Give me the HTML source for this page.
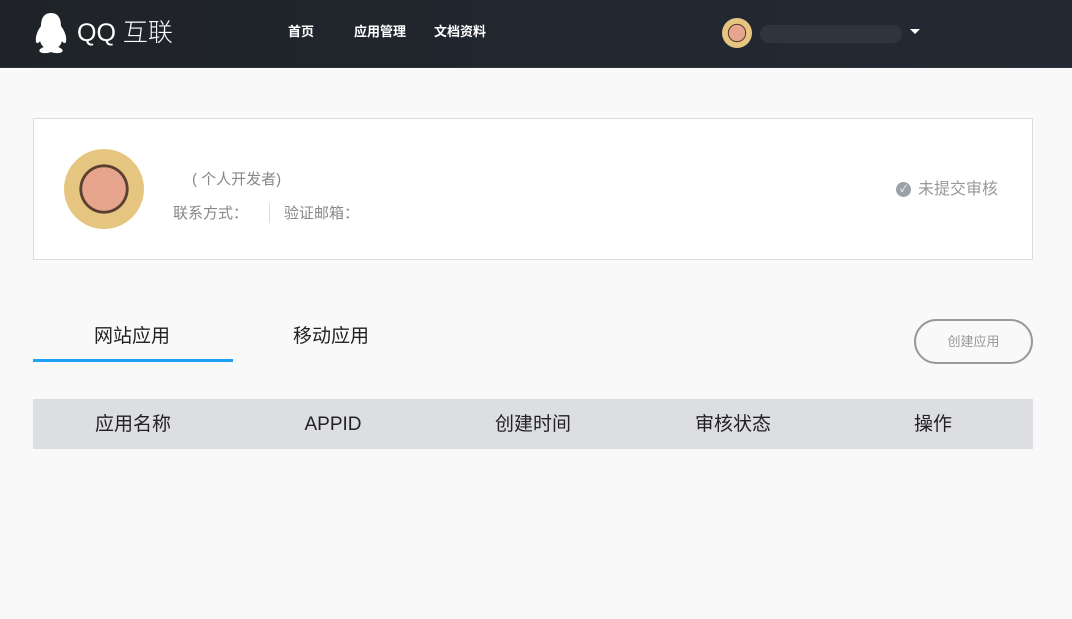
<!DOCTYPE html>
<html><head><meta charset="utf-8"><style>
*{margin:0;padding:0;box-sizing:border-box}
body{width:1072px;height:619px;background:#f9f9f9;font-family:"Liberation Sans","Noto Sans CJK SC",sans-serif;overflow:hidden;position:relative}
div,span{line-height:1}
.hd{position:absolute;left:0;top:0;width:1072px;height:68px;background:linear-gradient(90deg,#1f2328,#222830 60%,#232a33);border-bottom:1px solid #2e343b}
.a{position:absolute}
.nav{color:#fff;font-size:13px;font-weight:bold;top:25px}
.card{position:absolute;left:33px;top:118px;width:1000px;height:142px;background:#fff;border:1px solid #dcdcdc}
.face{border-radius:50%;background:radial-gradient(circle at 50% 50%,#e6a58c 0 38%,#5a4030 39% 43%,#e5c57f 44%)}
.th{position:absolute;top:399px;left:33px;width:1000px;height:50px;background:#dcdee2;font-size:19px;color:#222}
.th span{position:absolute;top:16px;width:200px;text-align:center;line-height:19px}
</style></head><body>
<div class="hd">
 <svg class="a" style="left:33px;top:12px" width="37" height="42" viewBox="0 0 37 42"><path d="M18 1C10 1 8 8 8 14 5 18 2 24 3 30c1 2 3 1 4-1 1 3 2 5 4 6-3 1-6 3-4 5 3 2 9 1 11 0 2 1 8 2 11 0 2-2-1-4-4-5 2-1 3-3 4-6 1 2 3 3 4 1 1-6-2-12-5-16 0-6-2-13-10-13z" fill="#fff"/></svg>
 <div class="a" style="left:77px;top:21px;color:#fff;font-size:25px;font-weight:300">QQ 互联</div>
 <div class="a nav" style="left:288px">首页</div>
 <div class="a nav" style="left:354px">应用管理</div>
 <div class="a nav" style="left:434px">文档资料</div>
 <div class="a face" style="left:722px;top:18px;width:30px;height:30px"></div>
 <div class="a" style="left:760px;top:25px;width:142px;height:18px;border-radius:9px;background:#2e353d"></div>
 <div class="a" style="left:910px;top:29px;width:0;height:0;border-left:5px solid transparent;border-right:5px solid transparent;border-top:5px solid #fff"></div>
</div>
<div class="card">
 <div class="a face" style="left:30px;top:30px;width:80px;height:80px"></div>
 <div class="a" style="left:158px;top:53px;font-size:15px;color:#888">( 个人开发者)</div>
 <div class="a" style="left:139px;top:87px;font-size:15px;color:#888">联系方式：</div>
 <div class="a" style="left:235px;top:84px;width:1px;height:20px;background:#ddd"></div>
 <div class="a" style="left:250px;top:87px;font-size:15px;color:#888">验证邮箱：</div>
 <div class="a" style="left:862px;top:63px;width:15px;height:15px;border-radius:50%;background:#9aa0a8;color:#fff;font-size:10px;text-align:center;line-height:15px">✓</div>
 <div class="a" style="left:884px;top:63px;font-size:16px;color:#999">未提交审核</div>
</div>
<div class="a" style="left:94px;top:327px;font-size:19px;color:#222">网站应用</div>
<div class="a" style="left:33px;top:359px;width:200px;height:3px;background:#1da1f2"></div>
<div class="a" style="left:293px;top:327px;font-size:19px;color:#222">移动应用</div>
<div class="a" style="left:914px;top:319px;width:119px;height:45px;border:2px solid #999;border-radius:23px;color:#999;font-size:13px;text-align:center;line-height:41px">创建应用</div>
<div class="th"><span style="left:0">应用名称</span><span style="left:200px">APPID</span><span style="left:400px">创建时间</span><span style="left:600px">审核状态</span><span style="left:800px">操作</span></div>
</body></html>
